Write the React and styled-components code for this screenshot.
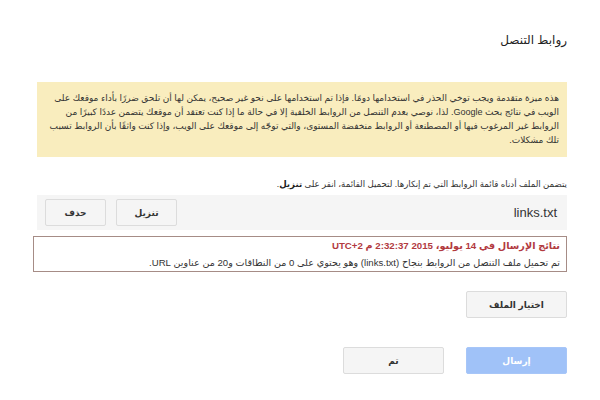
import React from "react";
import styled, { createGlobalStyle } from "styled-components";

const GlobalStyle = createGlobalStyle`
  html, body {
    margin: 0;
    padding: 0;
    background: #ffffff;
  }
  body {
    font-family: "Liberation Sans", "DejaVu Sans", Arial, sans-serif;
    color: #222;
  }
`;

const Page = styled.div`
  direction: rtl;
  width: 600px;
  height: 400px;
  box-sizing: border-box;
  padding: 30px 33px 0 33px;
  display: flex;
  flex-direction: column;
  overflow: hidden;
`;

const Title = styled.h1`
  margin: 0;
  font-size: 12px;
  line-height: 20px;
  font-weight: normal;
  color: #222;
`;

const Warning = styled.div`
  margin: 32px 0 0 4px;
  padding: 9px 8px 10px 8px;
  background: #f9edbe;
  font-size: 9px;
  line-height: 14px;
  color: #333;
  white-space: nowrap;
`;

const Hint = styled.p`
  margin: 20px 0 0 0;
  font-size: 8.6px;
  line-height: 14px;
  color: #333;

  b {
    color: #222;
  }
`;

const FileRow = styled.div`
  margin: 4px 0 0 4px;
  height: 35px;
  padding: 0 10px 0 8px;
  background: #f5f5f5;
  display: flex;
  align-items: center;
  justify-content: space-between;
`;

const FileName = styled.span`
  font-size: 13px;
  color: #333;
  direction: ltr;
`;

const Actions = styled.div`
  display: flex;
  gap: 10px;
`;

const Button = styled.button`
  width: ${(p) => p.$width || 61}px;
  height: 27px;
  box-sizing: border-box;
  padding: 0;
  border: 1px solid ${(p) => (p.$primary ? "#a7c6f8" : "#dcdcdc")};
  border-radius: 2px;
  background: ${(p) => (p.$primary ? "#a0c2f8" : "#f5f5f5")};
  color: ${(p) => (p.$primary ? "#ffffff" : "#333")};
  font-family: "Liberation Sans", "DejaVu Sans", Arial, sans-serif;
  font-size: 9px;
  font-weight: bold;
  cursor: pointer;
`;

const Result = styled.div`
  margin-top: 6px;
  border: 1px solid #a68c86;
  padding: 0 6px;
  font-size: 9.6px;
  line-height: 17px;
  color: #333;
`;

const ResultHead = styled.div`
  color: #b23a3f;
  font-weight: bold;
  font-size: 9.7px;
`;

const ChooseRow = styled.div`
  margin-top: 19px;
  display: flex;
`;

const Footer = styled.div`
  margin-top: 29px;
  display: flex;
  gap: 22px;
`;

export default function App() {
  return (
    <>
      <GlobalStyle />
      <Page>
        <Title>روابط التنصل</Title>

        <Warning>
          هذه ميزة متقدمة ويجب توخي الحذر في استخدامها دومًا. فإذا تم استخدامها على نحو غير صحيح، يمكن لها أن تلحق ضررًا بأداء موقعك على
          <br />
          الويب في نتائج بحث Google. لذا، نوصي بعدم التنصل من الروابط الخلفية إلا في حالة ما إذا كنت تعتقد أن موقعك يتضمن عددًا كبيرًا من
          <br />
          الروابط غير المرغوب فيها أو المصطنعة أو الروابط منخفضة المستوى، والتي توجّه إلى موقعك على الويب، وإذا كنت واثقًا بأن الروابط تسبب
          <br />
          تلك مشكلات.
        </Warning>

        <Hint>
          يتضمن الملف أدناه قائمة الروابط التي تم إنكارها. لتحميل القائمة، انقر على <b>تنزيل</b>.
        </Hint>

        <FileRow>
          <FileName>links.txt</FileName>
          <Actions>
            <Button>تنزيل</Button>
            <Button>حذف</Button>
          </Actions>
        </FileRow>

        <Result>
          <ResultHead>نتائج الإرسال في 14 يوليو، 2015 2:32:37 م UTC+2</ResultHead>
          <div>
            تم تحميل ملف التنصل من الروابط بنجاح (links.txt) وهو يحتوي على 0 من النطاقات و20 من عناوين URL.
          </div>
        </Result>

        <ChooseRow>
          <Button $width={101}>اختيار الملف</Button>
        </ChooseRow>

        <Footer>
          <Button $width={101} $primary>
            إرسال
          </Button>
          <Button $width={101}>تم</Button>
        </Footer>
      </Page>
    </>
  );
}
